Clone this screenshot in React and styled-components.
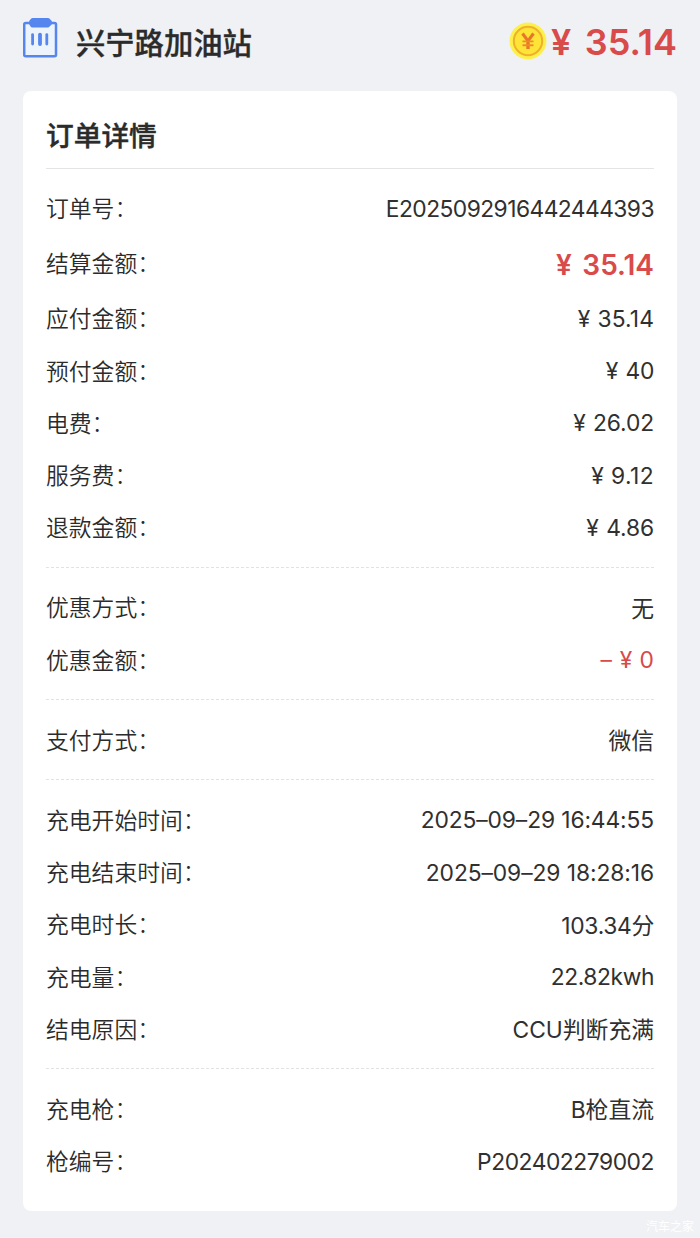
import React from 'react'
import styled, { createGlobalStyle } from 'styled-components'

const sections = [
  [
    { label: '订单号', value: 'E2025092916442444393', tracking: -0.55 },
    { label: '结算金额', price: '35.14', total: true },
    { label: '应付金额', price: '35.14', tracking: 0.1 },
    { label: '预付金额', price: '40', tracking: -0.3 },
    { label: '电费', price: '26.02', tracking: -0.1 },
    { label: '服务费', price: '9.12', tracking: 0.4 },
    { label: '退款金额', price: '4.86', tracking: -0.1 },
  ],
  [
    { label: '优惠方式', value: '无' },
    { label: '优惠金额', price: '0', discount: true },
  ],
  [
    { label: '支付方式', value: '微信' },
  ],
  [
    { label: '充电开始时间', value: '2025–09–29 16:44:55', tracking: -0.12 },
    { label: '充电结束时间', value: '2025–09–29 18:28:16', tracking: -0.08 },
    { label: '充电时长', value: '103.34分', tracking: -0.3 },
    { label: '充电量', value: '22.82kwh', tracking: -0.4 },
    { label: '结电原因', value: 'CCU判断充满' },
  ],
  [
    { label: '充电枪', value: 'B枪直流' },
    { label: '枪编号', value: 'P202402279002', tracking: -0.45 },
  ],
]

export default function App() {
  return (
    <>
      <GlobalStyle />
      <Page>
        <Header>
          <StationIcon />
          <StationName>兴宁路加油站</StationName>
          <CoinIcon />
          <HeaderPrice><Yen $wide>¥</Yen>35.14</HeaderPrice>
        </Header>

        <Card>
          <CardTitle>订单详情</CardTitle>
          {sections.map((rows, i) => (
            <Section key={i}>
              {rows.map(row => <OrderRow key={row.label} {...row} />)}
            </Section>
          ))}
        </Card>

        <Watermark>汽车之家</Watermark>
      </Page>
    </>
  )
}

function OrderRow({ label, value, price, total, discount, tracking = 0 }) {
  return (
    <Row $total={total}>
      <Label>{ label }<Colon>：</Colon></Label>
      <Value $total={total} $discount={discount} $tracking={tracking}>
        { discount && <Minus>–</Minus> }
        { price && <Yen $wide={total}>¥</Yen> }
        { price || value }
      </Value>
    </Row>
  )
}

function StationIcon() {
  return (
    <StationSvg viewBox="0 0 36 42">
      <rect x="1.2" y="5" width="31.8" height="33.2" rx="1.5" fill="#edf3fb" stroke="#5585ee" strokeWidth="2.5" />
      <path d="M10 0h14.5q2 0 2.6 1.300L28.800 3v3.300l-2.200 2.100q-1 1.200-3 1.200H10.500q-2 0-3-1.200L6.200 6.300V3l1.400-1.700Q8.500 0 10 0z" fill="#5585ee" />
      <g stroke="#5585ee" strokeLinecap="round">
        <path d="M9.600 16.600v9.400" strokeWidth="2.800" />
        <path d="M17 16.600v9.400" strokeWidth="3.800" />
        <path d="M23.800 16.600v9.400" strokeWidth="2.800" />
      </g>
    </StationSvg>
  )
}

function CoinIcon() {
  return (
    <CoinSvg viewBox="0 0 38 38">
      <circle cx="19" cy="19" r="18.5" fill="#fdf04c" />
      <circle cx="19" cy="19" r="14.2" fill="#fde436" stroke="#efb02c" strokeWidth="2" />
      <path d="M13.500 11.500L19 19l5.500-7.500" fill="none" stroke="#e97528" strokeWidth="3" />
      <path d="M19 18.500v8.500" stroke="#e97528" strokeWidth="3.400" />
      <path d="M13.500 19.400h11M13.500 23.200h11" stroke="#ef8b2a" strokeWidth="1.900" />
    </CoinSvg>
  )
}

const GlobalStyle = createGlobalStyle`
  * {
    box-sizing: border-box;
  }
  body {
    margin: 0;
    background: #eff1f4;
    color: #2b2b2b;
    font-family: Inter, 'Noto Sans CJK SC', sans-serif;
  }
`
const Page = styled.main`
  position: relative;
  height: 1238px;
  padding: 0 23px;
  overflow: hidden;
`
const Header = styled.header`
  display: flex;
  align-items: center;
  height: 91px;
  padding-bottom: 7px;
`
const StationSvg = styled.svg`
  width: 36px;
  height: 42px;
  margin: 0 17px 7px 0;
`
const StationName = styled.h1`
  flex: 1;
  margin: 0;
  padding-top: 3px;
  font-size: 29.3px;
  font-weight: 500;
  line-height: 42px;
  -webkit-text-stroke: 0.35px #2b2b2b;
`
const CoinSvg = styled.svg`
  width: 38px;
  height: 38px;
  margin: 0 4px 3px 0;
`
const HeaderPrice = styled.div`
  color: #d94a4a;
  font-size: 36px;
  font-weight: 600;
  line-height: 42px;
`
const Yen = styled.span`
  display: inline-block;
  width: ${props => props.$wide ? 0.94 : 0.87}em;
`
const Card = styled.section`
  height: 1120px;
  padding: 0 23px;
  background: #fff;
  border-radius: 8px;
`
const CardTitle = styled.h2`
  height: 78px;
  margin: 0;
  padding-top: 24px;
  border-bottom: 1px solid #e4e4e4;
  font-size: 27.7px;
  font-weight: 500;
  line-height: 42px;
  -webkit-text-stroke: 0.4px #2b2b2b;
`
const Section = styled.div`
  padding: 13.35px 0;

  & + & {
    border-top: 1px dashed #e2e2e2;
  }
`
const Row = styled.div`
  display: flex;
  justify-content: space-between;
  align-items: center;
  height: ${props => props.$total ? 57.5 : 52.3}px;
`
const Label = styled.span`
  padding-bottom: 1px;
  font-size: 22.8px;
  font-weight: 350;
`
const Colon = styled.span`
  position: relative;
  top: -1px;
  font-weight: 300;
`
const Value = styled.span`
  padding-top: ${props => props.$total ? 3 : 0}px;
  color: ${props => props.$total || props.$discount ? '#d94a4a' : '#303030'};
  font-size: ${props => props.$total ? 28 : 22.8}px;
  font-weight: ${props => props.$total ? 600 : 400};
  letter-spacing: ${props => props.$tracking}px;
`
const Minus = styled.span`
  margin-right: 8px;
`
const Watermark = styled.div`
  position: absolute;
  right: 6px;
  bottom: 3px;
  color: #fff;
  font-size: 12px;
  line-height: 16px;
`
